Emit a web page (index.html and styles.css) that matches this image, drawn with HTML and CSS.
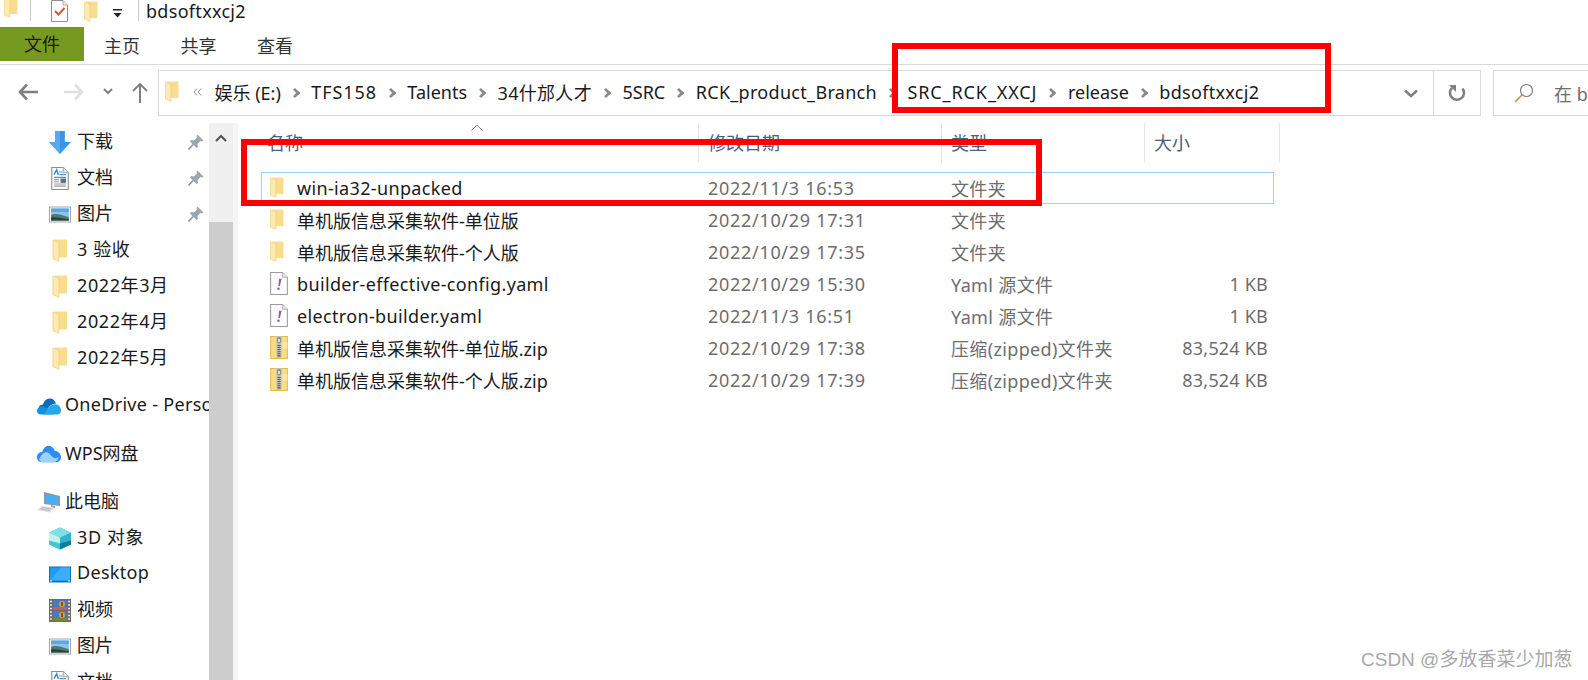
FILE: index.html
```html
<!DOCTYPE html>
<html lang="zh">
<head>
  <meta charset="UTF-8" />
  <title>bdsoftxxcj2</title>
  <link rel="stylesheet" href="styles.css">
</head>
<body>

  <svg class="defs" width="0" height="0">
    <symbol id="i-folder" viewBox="0 0 14 21">
      <path d="M2 0.5H13.5V17H5z" fill="#f9dd8e"/>
      <path d="M0.5 1L6 3V20.5L0.5 18z" fill="#fdeab2"/>
      <path d="M0.5 1L6 3V20.5L0.5 18z" fill="none" stroke="#f0cb70" stroke-width="0.6"/>
    </symbol>
    <symbol id="i-yaml" viewBox="0 0 17 22">
      <path d="M0.5 0.5H12L16.5 5V21.5H0.5z" fill="#fdfdfd" stroke="#9a9a9a"/>
      <path d="M12 0.5V5H16.5" fill="#eee" stroke="#b5b5b5"/>
      <path d="M8.5 6.5H11L9.4 13.5H8z" fill="#8a5cb5"/>
      <circle cx="8" cy="16" r="1.2" fill="#8a5cb5"/>
    </symbol>
    <symbol id="i-zip" viewBox="0 0 17 22">
      <path d="M0.5 0.5H16.5V21.5H0.5z" fill="#f8dd85" stroke="#e3bb4a"/>
      <path d="M12 6H16.5V12H12z" fill="#fbe9a8"/>
      <rect x="6" y="0" width="5" height="21" fill="#c4c4b8"/>
      <rect x="6.5" y="1" width="4" height="6" rx="2" fill="#8c8c8c"/>
      <rect x="7.5" y="3" width="2" height="2.5" fill="#e8e8e8"/>
      <path d="M7 9h3M7 11h3M7 13h3M7 15h3M7 17h3M7 19h3" stroke="#55554c" stroke-width="1"/>
    </symbol>
    <symbol id="i-down" viewBox="0 0 18 19">
      <path d="M5 0H13V9H18L9 19L0 9H5z" fill="#3b93e6"/>
      <path d="M5 0H9V19L0 9H5z" fill="#58a8ef"/>
    </symbol>
    <symbol id="i-doc" viewBox="0 0 16 21">
      <path d="M0.5 0.5H11L15.5 5V20.5H0.5z" fill="#fff" stroke="#8e8e8e"/>
      <path d="M11 0.5V5H15.5" fill="#eee" stroke="#aaa"/>
      <path d="M2.5 7L5 2.5L6.5 7" fill="none" stroke="#2a88d8" stroke-width="1.3"/>
      <path d="M7.5 4.5H10M7.5 7H13.5M2.5 9.5H13.5" stroke="#3f97e0" stroke-width="1"/>
      <rect x="8.5" y="10.5" width="5" height="4" fill="#55708a"/>
      <path d="M2.5 11.5H7M2.5 13.5H7M2.5 15.5H13.5M2.5 17.5H13.5" stroke="#9b9b9b" stroke-width="1"/>
    </symbol>
    <symbol id="i-pic" viewBox="0 0 22 16">
      <rect x="0.5" y="0.5" width="21" height="15" fill="#fff" stroke="#a5a5a5"/>
      <rect x="2" y="2" width="18" height="12" fill="#8fc3ea"/>
      <rect x="2" y="2" width="18" height="3.5" fill="#5fa7e0"/>
      <path d="M2 8.5C7 6.5 12 8 20 11V14H2z" fill="#4d7a6a"/>
      <path d="M2 11C8 10 13 12 20 13V14H2z" fill="#27463f"/>
    </symbol>
    <symbol id="i-onedrive" viewBox="0 0 24 16">
      <path d="M6 6C7 2 10 0 13 0C16 0 18 2 19 5C15 5 12 8 11 10L4 12C0 10 2 6 6 6z" fill="#0f6cbd"/>
      <path d="M4 16C1 16 0 14 0 12C0 10 2 8 5 8C7 8 10 9 13 12L17 16z" fill="#1490df"/>
      <path d="M10 12C12 7 16 5 19 6C22 6 24 9 24 12C24 14 23 16 20 16H6z" fill="#28a8ea"/>
    </symbol>
    <symbol id="i-wps" viewBox="0 0 23 17">
      <path d="M5 16C1 16 0 13 0 11C0 8 2 6 5 6C6 2 9 0 11 0C14 0 16 2 17 5C20 5 23 8 23 11C23 14 21 16 18 16z" fill="#2e8cf5"/>
      <path d="M2 13C6 5 10 5 13 9C15 12 18 13 21 11C20 14 18 16 16 16H6C4 16 3 15 2 13z" fill="#9dd2ff"/>
    </symbol>
    <symbol id="i-pc" viewBox="0 0 24 21">
      <path d="M7 0L23 4V14L7 12z" fill="#8a97a5"/>
      <path d="M8.5 2L21.5 5.2V12.5L8.5 11z" fill="#47b0f5"/>
      <path d="M14 13L18 14V16L14 15z" fill="#9aa5ad"/>
      <path d="M5 14L17 16L13 20.5L0 18z" fill="#dcdcdc"/>
      <path d="M5 15.5L14 17M3.5 17L12.5 18.6" stroke="#b3b3b3" stroke-width="0.8"/>
    </symbol>
    <symbol id="i-3d" viewBox="0 0 22 22">
      <path d="M11 0L22 5V17L11 22L0 17V5z" fill="#2fb4cf"/>
      <path d="M11 0L22 5L11 10L0 5z" fill="#7fdfe8"/>
      <path d="M0 5L11 10V22L0 17z" fill="#c4f0ef"/>
      <path d="M11 16L22 13V17L11 22z" fill="#0f7f9d"/>
      <path d="M11 16L0 13V17L11 22z" fill="#42c4d4"/>
    </symbol>
    <symbol id="i-desktop" viewBox="0 0 22 16">
      <rect x="0" y="0" width="22" height="16" fill="#0c74c4"/>
      <rect x="1" y="1" width="20" height="13" fill="#1e9cf5"/>
      <path d="M1 14L12 1H21V14z" fill="#3aaefa"/>
      <path d="M1 14.5H3M19 14.5H21" stroke="#e8f4ff" stroke-width="1"/>
    </symbol>
    <symbol id="i-video" viewBox="0 0 22 23">
      <rect x="0" y="0" width="22" height="23" fill="#6c6c6c"/>
      <rect x="4" y="1" width="14" height="10" fill="#4a78c8"/>
      <rect x="4" y="12" width="14" height="10" fill="#4a78c8"/>
      <circle cx="13" cy="5" r="3" fill="#d9a52b"/>
      <rect x="12" y="3" width="2" height="4" fill="#a33b3b"/>
      <circle cx="13" cy="16" r="3" fill="#d9a52b"/>
      <rect x="12" y="14" width="2" height="4" fill="#a33b3b"/>
      <rect x="4" y="8" width="14" height="3" fill="#b8635e"/>
      <rect x="4" y="19" width="14" height="3" fill="#6f8a3e"/>
      <path d="M1 2.5h2M1 6h2M1 9.5h2M1 13h2M1 16.5h2M1 20h2M19 2.5h2M19 6h2M19 9.5h2M19 13h2M19 16.5h2M19 20h2" stroke="#e8e8e8" stroke-width="1.5"/>
    </symbol>
    <symbol id="i-pin" viewBox="0 0 16 16">
      <path d="M9.5 0.5L15.5 6.5L14 7.5L12.5 7L9.5 10L10 13L8.5 14L2 7.5L3 6L6 6.5L9 3.5L8.5 2z" fill="#9ba6b0"/>
      <path d="M5 10.5L0.5 15.5" stroke="#8b96a0" stroke-width="1.6"/>
    </symbol>
  </svg>

  <div class="titlebar">
    <svg class="qa-folder1"><use href="#i-folder"/></svg>
    <span class="qa-sep"></span>
    <svg class="qa-check" viewBox="0 0 17 22">
      <path d="M0.5 0.5H12L16.5 5V21.5H0.5z" fill="#fff" stroke="#8e8e8e"/>
      <path d="M12 0.5V5H16.5" fill="#eee" stroke="#aaa"/>
      <path d="M4 11L7.5 14.5L13.5 8" fill="none" stroke="#e8531f" stroke-width="2"/>
    </svg>
    <svg class="qa-folder2"><use href="#i-folder"/></svg>
    <svg class="qa-drop" viewBox="0 0 9 9">
      <path d="M0 0H9V1.5H0z" fill="#222"/>
      <path d="M0.5 4H8.5L4.5 8.5z" fill="#222"/>
    </svg>
    <span class="qa-sep qa-sep2"></span>
    <span class="title-text">bdsoftxxcj2</span>
  </div>

  <div class="tabs">
    <div class="tab-file">文件</div>
    <div class="tab">主页</div>
    <div class="tab">共享</div>
    <div class="tab">查看</div>
  </div>

  <div class="address-row">
    <svg class="nav-back" viewBox="0 0 20 18">
      <path d="M9 1.5L2 9L9 16.5M2 9H20" fill="none" stroke="#808080" stroke-width="2.6"/>
    </svg>
    <svg class="nav-forward" viewBox="0 0 20 18">
      <path d="M11 1.5L18 9L11 16.5M18 9H0" fill="none" stroke="#e0e0e0" stroke-width="2.6"/>
    </svg>
    <svg class="nav-recent" viewBox="0 0 10 7">
      <path d="M1 1L5 5L9 1" fill="none" stroke="#808080" stroke-width="2"/>
    </svg>
    <svg class="nav-up" viewBox="0 0 16 20">
      <path d="M1 8L8 1L15 8M8 1V20" fill="none" stroke="#808080" stroke-width="2"/>
    </svg>

    <div class="address-box">
      <div class="crumbs">
        <svg class="crumb-folder"><use href="#i-folder"/></svg>
        <svg class="crumb-more" viewBox="0 0 9 8">
          <path d="M4 0.5L1 4L4 7.5M8 0.5L5 4L8 7.5" fill="none" stroke="#8a8a8a" stroke-width="1"/>
        </svg>
        <span>娱乐 (E:)</span><i class="sep"></i>
        <span class="caps">TFS158</span><i class="sep"></i>
        <span>Talents</span><i class="sep"></i>
        <span class="loose">34什邡人才</span><i class="sep"></i>
        <span>5SRC</span><i class="sep"></i>
        <span class="loose">RCK_product_Branch</span><i class="sep"></i>
        <span class="caps">SRC_RCK_XXCJ</span><i class="sep"></i>
        <span>release</span><i class="sep"></i>
        <span class="loose">bdsoftxxcj2</span>
      </div>
      <svg class="address-drop" viewBox="0 0 14 9">
        <path d="M1 1.5L7 7L13 1.5" fill="none" stroke="#808080" stroke-width="2.4"/>
      </svg>
      <div class="refresh">
        <svg viewBox="0 0 18 18" width="18" height="18">
          <path d="M14.5 4.5A7 7 0 1 1 4 3.8" fill="none" stroke="#808080" stroke-width="2.6"/>
          <path d="M1 1H8V8z" fill="#808080"/>
        </svg>
      </div>
    </div>

    <div class="search-box">
      <svg class="search-icon" viewBox="0 0 20 20">
        <circle cx="12.5" cy="7.5" r="6" fill="none" stroke="#808080" stroke-width="1.2"/>
        <path d="M8 12L1 19" stroke="#c98a4a" stroke-width="1.6"/>
      </svg>
      <span>在 b</span>
    </div>
  </div>

  <div class="main">
    <div class="sidebar">
      <div class="nav-item"><svg class="nav-icon"><use href="#i-down"/></svg><span class="nav-label">下载</span><svg class="pin"><use href="#i-pin"/></svg></div>
      <div class="nav-item"><svg class="nav-icon"><use href="#i-doc"/></svg><span class="nav-label">文档</span><svg class="pin"><use href="#i-pin"/></svg></div>
      <div class="nav-item"><svg class="nav-icon"><use href="#i-pic"/></svg><span class="nav-label">图片</span><svg class="pin"><use href="#i-pin"/></svg></div>
      <div class="nav-item"><svg class="nav-icon"><use href="#i-folder"/></svg><span class="nav-label num">3 验收</span></div>
      <div class="nav-item"><svg class="nav-icon"><use href="#i-folder"/></svg><span class="nav-label num">2022年3月</span></div>
      <div class="nav-item"><svg class="nav-icon"><use href="#i-folder"/></svg><span class="nav-label num">2022年4月</span></div>
      <div class="nav-item"><svg class="nav-icon"><use href="#i-folder"/></svg><span class="nav-label num">2022年5月</span></div>

      <div class="nav-item root group"><svg class="nav-icon"><use href="#i-onedrive"/></svg><span class="nav-label latin">OneDrive - Personal</span></div>
      <div class="nav-item root group"><svg class="nav-icon"><use href="#i-wps"/></svg><span class="nav-label">WPS网盘</span></div>
      <div class="nav-item root group"><svg class="nav-icon"><use href="#i-pc"/></svg><span class="nav-label">此电脑</span></div>

      <div class="nav-item"><svg class="nav-icon"><use href="#i-3d"/></svg><span class="nav-label num">3D 对象</span></div>
      <div class="nav-item"><svg class="nav-icon"><use href="#i-desktop"/></svg><span class="nav-label latin">Desktop</span></div>
      <div class="nav-item"><svg class="nav-icon"><use href="#i-video"/></svg><span class="nav-label">视频</span></div>
      <div class="nav-item"><svg class="nav-icon"><use href="#i-pic"/></svg><span class="nav-label">图片</span></div>
      <div class="nav-item"><svg class="nav-icon"><use href="#i-doc"/></svg><span class="nav-label">文档</span></div>
    </div>

    <div class="scrollbar">
      <div class="scroll-top">
        <svg viewBox="0 0 12 8" width="12" height="8">
          <path d="M1 7L6 2L11 7" fill="none" stroke="#505050" stroke-width="2"/>
        </svg>
      </div>
    </div>

    <div class="list">
      <div class="list-head">
        <div class="col-name">名称
          <svg class="sort-caret" viewBox="0 0 12 7"><path d="M0.5 6.5L6 1L11.5 6.5" fill="none" stroke="#8a8a8a"/></svg>
        </div>
        <div class="col-date">修改日期</div>
        <div class="col-type">类型</div>
        <div class="col-size">大小</div>
      </div>

      <div class="rows">
        <div class="row selected">
          <div class="cell-name latin-name"><svg class="file-icon"><use href="#i-folder"/></svg>win-ia32-unpacked</div>
          <div class="cell-date">2022/11/3 16:53</div>
          <div class="cell-type">文件夹</div>
          <div class="cell-size"></div>
        </div>
        <div class="row">
          <div class="cell-name"><svg class="file-icon"><use href="#i-folder"/></svg>单机版信息采集软件-单位版</div>
          <div class="cell-date">2022/10/29 17:31</div>
          <div class="cell-type">文件夹</div>
          <div class="cell-size"></div>
        </div>
        <div class="row">
          <div class="cell-name"><svg class="file-icon"><use href="#i-folder"/></svg>单机版信息采集软件-个人版</div>
          <div class="cell-date">2022/10/29 17:35</div>
          <div class="cell-type">文件夹</div>
          <div class="cell-size"></div>
        </div>
        <div class="row">
          <div class="cell-name latin-name"><svg class="file-icon wide"><use href="#i-yaml"/></svg>builder-effective-config.yaml</div>
          <div class="cell-date">2022/10/29 15:30</div>
          <div class="cell-type">Yaml 源文件</div>
          <div class="cell-size">1 KB</div>
        </div>
        <div class="row">
          <div class="cell-name latin-name"><svg class="file-icon wide"><use href="#i-yaml"/></svg>electron-builder.yaml</div>
          <div class="cell-date">2022/11/3 16:51</div>
          <div class="cell-type">Yaml 源文件</div>
          <div class="cell-size">1 KB</div>
        </div>
        <div class="row">
          <div class="cell-name"><svg class="file-icon wide"><use href="#i-zip"/></svg>单机版信息采集软件-单位版.zip</div>
          <div class="cell-date">2022/10/29 17:38</div>
          <div class="cell-type">压缩(zipped)文件夹</div>
          <div class="cell-size">83,524 KB</div>
        </div>
        <div class="row">
          <div class="cell-name"><svg class="file-icon wide"><use href="#i-zip"/></svg>单机版信息采集软件-个人版.zip</div>
          <div class="cell-date">2022/10/29 17:39</div>
          <div class="cell-type">压缩(zipped)文件夹</div>
          <div class="cell-size">83,524 KB</div>
        </div>
      </div>
    </div>
  </div>

  <div class="mark mark-address"></div>
  <div class="mark mark-row"></div>
  <div class="watermark">CSDN @多放香菜少加葱</div>

</body>
</html>
```

FILE: styles.css
```css
* {
  margin: 0; padding: 0; box-sizing: border-box;
}

html, body {
  width: 1588px;
  height: 680px;
  overflow: hidden;
  background: white;
}

body {
  position: relative;
  font-family: "Noto Sans", "Noto Sans CJK SC", sans-serif;
  font-size: 18px;
  color: #1a1a1a;
  display: flex;
  flex-direction: column;
}

.defs {
  position: absolute;
}

svg {
  display: block;
  flex-shrink: 0;
}


/* quick access bar */
.titlebar {
  height: 27px;
  display: flex;
  align-items: flex-start;
  overflow: hidden;
  flex-shrink: 0;
}

.qa-folder1 {
  width: 14px;
  height: 21px;
  margin: -3px 0 0 4px;
}

.qa-sep {
  width: 1px;
  height: 21px;
  background: #c8c8c8;
  margin-left: 12px;
}

.qa-check {
  width: 17px;
  height: 22px;
  margin-left: 20px;
}

.qa-folder2 {
  width: 14px;
  height: 21px;
  margin: 1px 0 0 16px;
}

.qa-drop {
  width: 9px;
  height: 9px;
  margin: 9px 0 0 15px;
}

.qa-sep2 {
  margin-left: 16px;
}

.title-text {
  margin-left: 7px;
  line-height: 22px;
  letter-spacing: 0.3px;
}


/* ribbon tabs */
.tabs {
  height: 38px;
  display: flex;
  border-bottom: 1px solid #d9d9d9;
  flex-shrink: 0;
}

.tab-file {
  width: 84px;
  height: 34px;
  background: #76991f;
  text-align: center;
  line-height: 34px;
}

.tab {
  margin-left: 20px;
  margin-right: 20.5px;
  line-height: 38px;
  color: #333;
}


/* address row */
.address-row {
  height: 58px;
  display: flex;
  align-items: flex-start;
  flex-shrink: 0;
  padding-top: 5px;
}

.nav-back, .nav-forward {
  width: 20px;
  height: 18px;
  margin-top: 13px;
}

.nav-back {
  margin-left: 18px;
}

.nav-forward {
  margin-left: 26px;
}

.nav-recent {
  width: 10px;
  height: 7px;
  margin: 18px 0 0 19px;
}

.nav-up {
  width: 16px;
  height: 20px;
  margin: 13px 0 0 19px;
}

.address-box {
  width: 1323px;
  height: 46px;
  margin-left: 10px;
  border: 1px solid #d9d9d9;
  display: flex;
  align-items: center;
  flex-shrink: 0;
}

.crumbs {
  flex: 1;
  display: flex;
  align-items: center;
  white-space: nowrap;
  padding-left: 6px;
  height: 100%;
  padding-bottom: 3px;
}

.crumb-folder {
  width: 14px;
  height: 21px;
}

.crumb-more {
  width: 9px;
  height: 8px;
  margin: 0 12.5px 0 14px;
}

.caps {
  letter-spacing: 0.9px;
}

.loose {
  letter-spacing: 0.3px;
}

.sep {
  display: block;
  width: 8px;
  height: 8px;
  border-top: 3px solid #8a8a8a;
  border-right: 3px solid #8a8a8a;
  transform: rotate(45deg) scale(0.9);
  margin: 2px 12.5px 0 10px;
  flex-shrink: 0;
}

.address-drop {
  width: 14px;
  height: 9px;
  margin-right: 15px;
}

.refresh {
  width: 47px;
  height: 100%;
  border-left: 1px solid #d9d9d9;
  display: flex;
  align-items: center;
  justify-content: center;
}

.search-box {
  width: 95px;
  height: 46px;
  margin-left: 12px;
  border: 1px solid #d9d9d9;
  border-right: 0;
  display: flex;
  align-items: center;
  white-space: nowrap;
  color: #6d6d6d;
  padding-left: 20px;
  flex-shrink: 0;
}

.search-icon {
  width: 20px;
  height: 20px;
  margin-right: 20px;
}


/* main area */
.main {
  flex: 1;
  display: flex;
  min-height: 0;
  overflow: hidden;
}

.sidebar {
  width: 209px;
  overflow: hidden;
  padding-top: 1px;
  flex-shrink: 0;
}

.nav-item {
  height: 36px;
  display: flex;
  align-items: center;
  padding-left: 49px;
  white-space: nowrap;
  position: relative;
}

.nav-item.group {
  margin-top: 12px;
}

.nav-item.root {
  padding-left: 37px;
}

.nav-icon {
  width: 22px;
  height: 23px;
  margin-right: 6px;
}

.nav-item.root .nav-icon {
  width: 24px;
  margin-right: 4px;
}

.nav-label {
  padding-bottom: 4px;
}

.nav-label.num {
  letter-spacing: 0.6px;
}

.nav-label.latin {
  letter-spacing: 0.3px;
}

.pin {
  width: 16px;
  height: 16px;
  position: absolute;
  left: 188px;
  top: 10px;
}

.scrollbar {
  width: 24px;
  background: #cdcdcd;
  flex-shrink: 0;
}

.scroll-top {
  height: 99px;
  background: #f0f0f0;
  padding: 11px 0 0 6px;
}

.list {
  flex: 1;
  border-left: 5px solid #f5f5f5;
  padding-left: 12px;
}

.list-head {
  height: 40px;
  display: grid;
  grid-template-columns: 449px 243px 203px 135px;
  color: #4c607a;
}

.list-head > div {
  border-right: 1px solid #e5e5e5;
  line-height: 40px;
  position: relative;
}

.col-name { padding-left: 17px; }
.col-date { padding-left: 9px; }
.col-type { padding-left: 9px; }
.col-size { padding-left: 9px; }

.sort-caret {
  width: 12px;
  height: 7px;
  position: absolute;
  left: 221px;
  top: 1px;
}

.rows {
  margin: 9px 0 0 11px;
  width: 1013px;
}

.row {
  height: 32px;
  display: grid;
  grid-template-columns: 440px 242px 200px 1fr;
  align-items: center;
  border: 1px solid transparent;
  white-space: nowrap;
  color: #1a1a1a;
  padding-bottom: 1px;
}

.row.selected {
  border-color: #99d1ff;
}

.cell-name {
  display: flex;
  align-items: center;
  padding-left: 8px;
}

.latin-name {
  letter-spacing: 0.35px;
}

.file-icon {
  width: 14px;
  height: 21px;
  margin-right: 13px;
}

.file-icon.wide {
  width: 18px;
  height: 23px;
  margin-right: 9px;
}

.cell-date, .cell-type, .cell-size {
  color: #6d6d6d;
}

.cell-date { padding-left: 6px; letter-spacing: 0.7px; }
.cell-type { padding-left: 7px; letter-spacing: 0.35px; }
.cell-size { text-align: right; padding-right: 5px; letter-spacing: 0.2px; }


/* red boxes drawn over the screenshot */
.mark {
  position: absolute;
  border: 6px solid #f00;
}

.mark-address {
  left: 892px;
  top: 43px;
  width: 439px;
  height: 70px;
}

.mark-row {
  left: 241px;
  top: 139px;
  width: 801px;
  height: 67px;
}

.watermark {
  position: absolute;
  left: 1361px;
  top: 649px;
  font-family: "Liberation Sans", "Noto Sans CJK SC", sans-serif;
  font-size: 19px;
  line-height: 22px;
  color: #a8a8a8;
  white-space: nowrap;
}
```
